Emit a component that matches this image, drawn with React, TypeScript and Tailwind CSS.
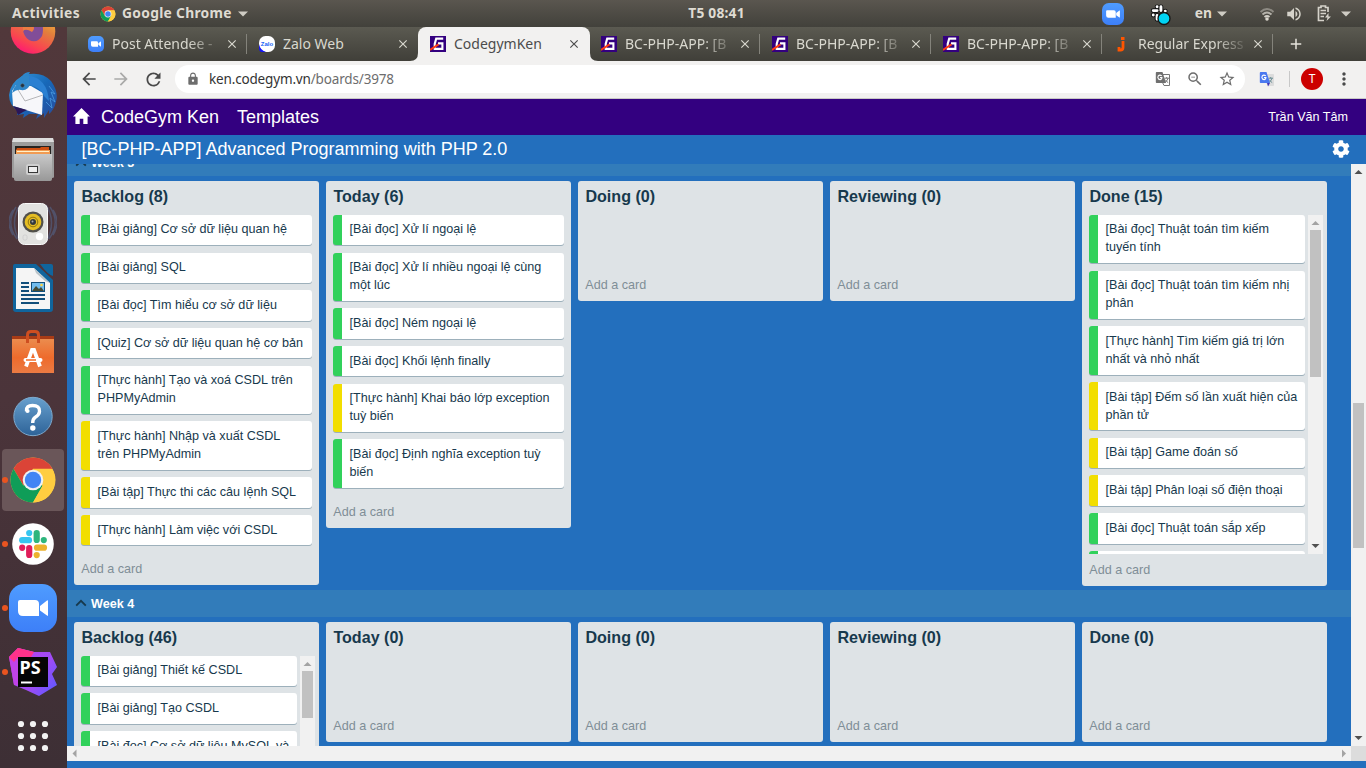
import React from "react";
import { MdArrowBack, MdArrowForward, MdClose, MdLock, MdRefresh, MdStarBorder, MdAdd, MdMoreVert, MdZoomOut, MdVolumeUp } from "react-icons/md";
import { FaCog } from "react-icons/fa";

type CardData = { text: string[]; yellow?: boolean };

const g = (...text: string[]): CardData => ({ text });
const y = (...text: string[]): CardData => ({ text, yellow: true });

const week3Backlog = [
  g("[Bài giảng] Cơ sở dữ liệu quan hệ"),
  g("[Bài giảng] SQL"),
  g("[Bài đọc] Tìm hiểu cơ sở dữ liệu"),
  g("[Quiz] Cơ sở dữ liệu quan hệ cơ bản"),
  g("[Thực hành] Tạo và xoá CSDL trên", "PHPMyAdmin"),
  y("[Thực hành] Nhập và xuất CSDL", "trên PHPMyAdmin"),
  y("[Bài tập] Thực thi các câu lệnh SQL"),
  y("[Thực hành] Làm việc với CSDL"),
];
const week3Today = [
  g("[Bài đọc] Xử lí ngoại lệ"),
  g("[Bài đọc] Xử lí nhiều ngoại lệ cùng", "một lúc"),
  g("[Bài đọc] Ném ngoại lệ"),
  g("[Bài đọc] Khối lệnh finally"),
  y("[Thực hành] Khai báo lớp exception", "tuỳ biến"),
  g("[Bài đọc] Định nghĩa exception tuỳ", "biến"),
];
const week3Done = [
  g("[Bài đọc] Thuật toán tìm kiếm", "tuyến tính"),
  g("[Bài đọc] Thuật toán tìm kiếm nhị", "phân"),
  g("[Thực hành] Tìm kiếm giá trị lớn", "nhất và nhỏ nhất"),
  y("[Bài tập] Đếm số lần xuất hiện của", "phần tử"),
  y("[Bài tập] Game đoán số"),
  y("[Bài tập] Phân loại số điện thoại"),
  g("[Bài đọc] Thuật toán sắp xếp"),
  g(" "),
];
const week4Backlog = [
  g("[Bài giảng] Thiết kế CSDL"),
  g("[Bài giảng] Tạo CSDL"),
  g("[Bài đọc] Cơ sở dữ liệu MySQL và"),
];

function Arrow({ dir, dim }: { dir: "up" | "down" | "left" | "right"; dim?: boolean }) {
  const d = {
    up: "M3.5 10L7.5 6L11.5 10Z",
    down: "M3.5 5L7.5 9L11.5 5Z",
    left: "M9.5 3.5L5.5 7.5L9.5 11.5Z",
    right: "M6 3.5L10 7.5L6 11.5Z",
  }[dir];
  return (
    <svg width="15" height="15" className={dim ? "shrink-0 fill-[#a3a3a3]" : "shrink-0 fill-[#505050]"}>
      <path d={d} />
    </svg>
  );
}

function Card({ card }: { card: CardData }) {
  return (
    <div className={`mb-[7.25px] rounded-[3px] border-l-[9px] bg-white pt-[6.575px] pb-[5.925px] pl-[7.5px] shadow-[0_1px_0_#9db0bb] ${card.yellow ? "border-[#f2de00]" : "border-[#31d15b]"}`}>
      {card.text.map((t) => (
        <div key={t} className="h-[18px] whitespace-nowrap text-[12.6px] leading-[16px] text-[#17394d]">{t}</div>
      ))}
    </div>
  );
}

function Column({ title, cards = [], scroll }: { title: string; cards?: CardData[]; scroll?: "long" | "short" }) {
  return (
    <section className="w-[245px] shrink-0 rounded-[3px] bg-[#dee3e6]">
      <h3 className="h-[33.8px] pl-[7.4px] text-[16.1px] leading-[31px] font-bold text-[#17394d]">{title}</h3>
      {scroll ? (
        <div className="mr-[4px] ml-[7px] flex h-[338.8px] overflow-hidden">
          <div className="mr-[3px] grow">
            {cards.map((c) => <Card key={c.text[0]} card={c} />)}
          </div>
          <div className="flex w-[15px] flex-col items-center bg-[#f1f1f1]">
            <Arrow dir="up" dim />
            <div className={scroll === "long" ? "h-[147px] w-[11px] bg-[#c1c1c1]" : "h-[47px] w-[11px] bg-[#c1c1c1]"} />
            <div className="grow" />
            <Arrow dir="down" />
          </div>
        </div>
      ) : (
        <div className="mx-[7px] min-h-[53.6px]">
          {cards.map((c) => <Card key={c.text[0]} card={c} />)}
        </div>
      )}
      <div className="h-[32.4px] pt-[7.74px] pl-[7.3px] text-[12.6px] leading-[18px] text-[#7f8e97]">Add a card</div>
    </section>
  );
}

function WeekBand({ label }: { label: string }) {
  return (
    <div className="flex h-[27px] shrink-0 items-center bg-[#327cba] pl-[8px]">
      <svg width="12" height="8" className="fill-none stroke-[#17394d] stroke-[1.9]"><path d="M1.2 6.6L6 1.9L10.8 6.6" /></svg>
      <span className="pt-px pl-[4px] text-[12.6px] leading-[18px] font-bold text-white">{label}</span>
    </div>
  );
}

function CodegymIcon() {
  return (
    <svg width="16" height="16" className="shrink-0">
      <rect width="16" height="16" fill="#33007f" />
      <path d="M13.200 2.600H6.200L4.700 8V12.900H12.400V7.400H8" fill="none" stroke="#fff" strokeWidth="2.100" />
      <path d="M0 14L8.500 8.400" stroke="#ff3c14" strokeWidth="2" />
    </svg>
  );
}

function TranslateIcon({ blue }: { blue?: boolean }) {
  return (
    <svg width="16" height="16" viewBox="0 0 16 16" className="shrink-0">
      <path d="M6 3.500H14.500V14.500H9L7.500 11.500" fill={blue ? "#dcdcdc" : "#fff"} stroke={blue ? "#dcdcdc" : "#777"} />
      <path d="M9.500 7.200H14M11.700 6V7.200M13 7.200Q12.500 10 9.800 11.500M10.500 8.800Q11.500 10.800 13.200 11.600" fill="none" stroke={blue ? "#6d8f96" : "#777"} strokeWidth="1" />
      <path d="M1.500 1H7.500L11 12H1.500Q.8 12 .8 11V2Q.8 1 1.500 1Z" fill={blue ? "#4a78ef" : "#6f6f6f"} />
      {blue && <path d="M8 12H11L9 15.500Z" fill="#4035b8" />}
      <path d="M6.800 4.900Q4.800 3.300 3.300 4.900Q2.300 6.500 3.500 8Q5.200 9.300 6.600 7.900L6.900 6.600H5" fill="none" stroke="#fff" strokeWidth="1.100" />
    </svg>
  );
}

function Camera({ size }: { size: number }) {
  return (
    <svg width={size} height={size} viewBox="0 0 48 48" className="shrink-0">
      <defs><linearGradient id="cam" x2="0" y2="1"><stop stopColor="#4f9cff" /><stop offset="1" stopColor="#3d7ff8" /></linearGradient></defs>
      <rect width="48" height="48" rx="15" fill="url(#cam)" />
      <path d="M9 18Q9 16 11 16H26Q30 16 30 20V32H14Q9 32 9 27ZM31 22L38 16.5Q39 16 39 17V31Q39 32.500 38 31.500L31 26.500Z" fill="#fff" />
    </svg>
  );
}

function ChromeLogo({ size }: { size: number }) {
  return (
    <svg width={size} height={size} viewBox="0 0 48 48" className="shrink-0">
      <circle cx="24" cy="24" r="22.500" fill="#ffcd40" />
      <path d="M4.500 12.800A22.500 22.500 0 0 1 43.500 12.800H24L14.300 29.600Z" fill="#db4437" />
      <path d="M4.500 12.800A22.500 22.500 0 0 0 24 46.500L33.700 29.600L24 24L14.300 29.600Z" fill="#0f9d58" />
      <path d="M43.500 13.500H24V24L33.700 29.600L24 46.500A22.500 22.500 0 0 0 43.500 13.500Z" fill="#ffcd40" />
      <circle cx="24" cy="24" r="10.300" fill="#f1f1f1" />
      <circle cx="24" cy="24" r="8.200" fill="#4285f4" />
    </svg>
  );
}

function Firefox() {
  return (
    <svg width="48" height="48" viewBox="0 0 48 48">
      <defs><linearGradient id="ff" x1="0.3" y1="1" x2="0.8" y2="0"><stop stopColor="#ff1676" /><stop offset=".25" stopColor="#f9474f" /><stop offset=".6" stopColor="#e2803c" /><stop offset="1" stopColor="#ffc53b" /></linearGradient></defs>
      <circle cx="24" cy="23.500" r="22.300" fill="url(#ff)" />
      <path d="M14 20Q14 28 20 32Q28 36 33 28Q35 22 33 15H14Z" fill="#814d98" />
      <path d="M7 15L14 17L14 23Q17 20 23 24Q27 21 23 15Z" fill="#ec7d42" />
    </svg>
  );
}

function Thunderbird() {
  return (
    <svg width="48" height="48" viewBox="0 0 48 48">
      <defs><linearGradient id="tb" x2="1" y2="1"><stop stopColor="#3a9bd9" /><stop offset=".5" stopColor="#1768b8" /><stop offset="1" stopColor="#2a4a9a" /></linearGradient></defs>
      <path d="M13 4Q16 0 21 0L20 2Q34 0 42 9Q50 20 47 30Q45 38 40 42L40 38L35 46L35 41L27 47L29 42L20 42L14 46L15 42L8 43L9 39Q0 33 0 23Q1 11 13 4Z" fill="url(#tb)" />
      <path d="M3 19L7 13L22 14L34 21L33 43L4 34Z" fill="#f7f7fa" />
      <path d="M8 16L16 29L34 23" fill="none" stroke="#b5b5b8" />
      <path d="M4 34L18 38L14 40L9 43Q8 38 4 34Z" fill="#2b1658" />
      <path d="M13 4Q9 7 8 12Q4 16 3 21Q8 17 12 18Q19 19 21 12L20 3Z" fill="#2f86c8" />
      <path d="M20 4Q38 6 40 29L35 24Q32 16 21 13Z" fill="#2b80d2" />
      <path d="M40 14L46 22L42 20L46 30L41 26L43 36L37 30" fill="none" stroke="#4a9be0" strokeWidth=".8" />
      <circle cx="13.500" cy="13.500" r="1.700" fill="#1c3148" stroke="#65563a" strokeWidth=".5" />
    </svg>
  );
}

function Files() {
  return (
    <svg width="48" height="48" viewBox="0 0 48 48">
      <defs><linearGradient id="fi" x2="0" y2="1"><stop stopColor="#c9c9c9" /><stop offset="1" stopColor="#989898" /></linearGradient></defs>
      <path d="M4 2H44L45 7V41Q45 42 43 42H5Q3 42 3 41V7Z" fill="#9c9c9c" />
      <path d="M4 2H44L45 6H3Z" fill="#ddd" />
      <rect x="6" y="10" width="36" height="9" fill="#252321" />
      <path d="M8 12H31L32 11H40V19H7V14Z" fill="#ce4f12" />
      <path d="M7 14H41V18H7Z" fill="#f19b52" /><path d="M8 15.500H40" stroke="#fff0c8" />
      <path d="M5 18H43V43Q43 45 41 45H7Q5 45 5 43Z" fill="url(#fi)" />
      <rect x="17" y="28" width="14" height="11" rx="2.500" fill="#cfcfcf" />
      <rect x="19.500" y="30.500" width="9" height="6" fill="#eee" stroke="#383838" />
    </svg>
  );
}

function Rhythmbox() {
  return (
    <svg width="48" height="48" viewBox="0 0 48 48">
      <g fill="none" stroke="#536b97" strokeWidth="1.500" opacity=".5">
        <path d="M7 7Q-4 23 8 39M4 10Q-4 22 4 35M11 5Q0 22 11 42M41 7Q52 23 40 39M44 10Q52 22 44 35M37 5Q48 22 37 42" />
      </g>
      <rect x="9.500" y="3.500" width="29" height="41" rx="6" fill="#e2e2e0" stroke="#fafafa" />
      <circle cx="24" cy="22" r="10.500" fill="#51504b" />
      <circle cx="24" cy="22" r="8.300" fill="#e5bd22" />
      <circle cx="24" cy="22" r="4.800" fill="none" stroke="#907510" />
      <circle cx="24" cy="22" r="3" fill="#343a3e" /><circle cx="23.500" cy="21.500" r="1" fill="#aaa" />
      <circle cx="30.500" cy="36.500" r="3.700" fill="#fff" />
      <rect x="14" y="35" width="4" height="5" rx="1.500" fill="none" stroke="#d0d0d0" />
    </svg>
  );
}

function Writer() {
  return (
    <svg width="48" height="48" viewBox="0 0 48 48">
      <path d="M6 0H27L44 16V45Q44 48 41 48H7Q4 48 4 45V2Q4 0 6 0ZM31 0H42Q44 0 44 2V12Q39 11 31 0Z" fill="#10659d" />
      <path d="M7 4H25L41 19V45H7Z" fill="#f5f5f5" />
      <path d="M25 4L41 19L36 17L27 9Z" fill="#b9c4ca" />
      <path d="M12 19H20M12 23H20M12 27H20M12 31H36M12 35H36M12 39H30" stroke="#124f7b" strokeWidth="2" />
      <rect x="22.500" y="18.500" width="13" height="9" fill="#72bdee" stroke="#124f7b" />
      <path d="M23 27L27 22L30 25L32 23L35 27Z" fill="#454b35" /><circle cx="32.500" cy="21" r="1.300" fill="#ffd43d" />
    </svg>
  );
}

function Software() {
  return (
    <svg width="48" height="48" viewBox="0 0 48 48">
      <defs><linearGradient id="so" x2="0" y2="1"><stop stopColor="#eb8c4e" /><stop offset=".55" stopColor="#ee6b2c" /><stop offset="1" stopColor="#eb7b43" /></linearGradient></defs>
      <path d="M3 8H45V12H3Z" fill="#a83b16" />
      <path d="M3 11H45V45H3Z" fill="url(#so)" />
      <path d="M18.500 15V7Q18.500 3.500 22 3.500H26Q29.500 3.500 29.500 7V15" fill="none" stroke="#ce4e20" strokeWidth="3" />
      <path d="M17 38.500L23 21.800H25L31 38.500" fill="none" stroke="#fff" strokeWidth="3.800" />
      <path d="M16.500 32H31.500" stroke="#fff" strokeWidth="4" strokeLinecap="round" />
      <path d="M17 32H27" stroke="#f06b27" strokeWidth="1.500" />
    </svg>
  );
}

function Help() {
  return (
    <svg width="48" height="48" viewBox="0 0 48 48">
      <defs><linearGradient id="he" x2="0" y2="1"><stop stopColor="#67a0ce" /><stop offset="1" stopColor="#2e6398" /></linearGradient></defs>
      <circle cx="24" cy="24.500" r="19.200" fill="url(#he)" stroke="#7da9cd" />
      <path d="M17.500 19Q17 13.500 23.500 13.500Q31 13.500 30.500 19.500Q30.300 23 26 25.500Q23.700 27 23.700 31" fill="none" stroke="#fff" strokeWidth="3.400" />
      <circle cx="18.500" cy="19" r="2.100" fill="#fff" /><circle cx="23.800" cy="36" r="2.700" fill="#fff" />
    </svg>
  );
}

function Slack() {
  return (
    <svg width="48" height="48">
      <circle cx="24" cy="24" r="20.800" fill="#fff" />
      <g strokeWidth="6.200" strokeLinecap="round">
        <path d="M13.200 20.200H20" stroke="#36c5f0" /><path d="M27.700 13.200V20" stroke="#2eb67d" />
        <path d="M28 27.700H35" stroke="#ecb22e" /><path d="M20.200 28V35" stroke="#e01e5a" />
        <path d="M20.200 13V13.100" stroke="#36c5f0" /><path d="M34.800 20V20.100" stroke="#2eb67d" />
        <path d="M27.700 35V35.100" stroke="#ecb22e" /><path d="M13.200 27.700V27.800" stroke="#e01e5a" />
      </g>
    </svg>
  );
}

function PhpStorm() {
  return (
    <div className="relative h-12 w-12">
      <svg width="48" height="48" viewBox="0 0 48 48">
        <defs><linearGradient id="ps" x2="1" y2=".7"><stop stopColor="#ff318c" /><stop offset=".3" stopColor="#b345f1" /><stop offset=".7" stopColor="#9d4bf5" /><stop offset="1" stopColor="#6b57ff" /></linearGradient></defs>
        <path d="M0 9L9 0L25 4L41 4L48 19L43 26L48 37L30 48L17 42L5 37Z" fill="url(#ps)" />
        <path d="M0 9L9 0L25 4L23 9H9V37H5Z" fill="#c043e8" />
        <path d="M0 9L9 0L25 4L22 9H9L5 14Z" fill="#ff328a" />
        <rect x="9" y="9" width="30" height="30" fill="#050505" />
        <path d="M12 34.500H23" stroke="#fff" strokeWidth="2" />
      </svg>
      <span className="absolute top-[11px] left-[10.500px] font-['Noto_Sans',sans-serif] text-[18px] leading-[17px] font-bold text-white">PS</span>
    </div>
  );
}

function AppsGrid() {
  return (
    <svg width="48" height="48" fill="#f3f3f3">
      {[12, 24, 36].map((cy) => [12, 24, 36].map((cx) => <circle key={`${cx}-${cy}`} cx={cx} cy={cy} r="3.100" />))}
    </svg>
  );
}

function Launcher() {
  const items = [
    { icon: <Firefox /> }, { icon: <Thunderbird /> }, { icon: <Files /> }, { icon: <Rhythmbox /> },
    { icon: <Writer /> }, { icon: <Software /> }, { icon: <Help /> },
    { icon: <ChromeLogo size={48} />, running: true, active: true },
    { icon: <Slack />, running: true }, { icon: <Camera size={48} />, running: true },
    { icon: <PhpStorm />, running: true }, { icon: <AppsGrid /> },
  ];
  return (
    <aside className="w-[67px] shrink-0 overflow-hidden bg-linear-to-b from-[#51383b] via-[#4b343a] to-[#3d2f35]">
      <div className="-mt-[27px]">
        {items.map((it, i) => (
          <div key={i} className="flex h-[64px] items-center pl-[2px]">
            <div className={`flex h-[62px] w-[62px] items-center rounded-[4px] ${it.active ? "bg-[#6a5659]" : ""}`}>
              <div className={`h-[6px] w-[6px] rounded-full ${it.running ? "bg-[#e95420]" : ""}`} />
              <div className="ml-px">{it.icon}</div>
            </div>
          </div>
        ))}
      </div>
    </aside>
  );
}

function Tab({ icon, title, active, divider, fade }: { icon: React.ReactNode; title: string; active?: boolean; divider?: boolean; fade?: boolean }) {
  return (
    <div className={`relative flex h-[34px] shrink-0 items-center pl-[12px] ${active ? "-mr-px w-[172px] rounded-t-[8px] bg-[#f2f1f0] text-[#4c4c4c]" : "w-[171px] text-[#d9d8cf]"}`}>
      {icon}
      <span className={`ml-[8px] w-[106px] overflow-hidden text-[14px] leading-[20px] whitespace-nowrap ${fade ? "[mask-image:linear-gradient(to_right,black_76px,transparent_112px)]" : ""}`}>{title}</span>
      <MdClose size={14} className="ml-[7px] shrink-0" />
      {divider && <i className="absolute top-[7px] right-0 h-[20px] w-px bg-[#84837b]" />}
      {active && (
        <>
          <svg width="8" height="8" className="absolute bottom-0 -left-[8px]"><path d="M8 0V8H0Q8 8 8 0" fill="#f2f1f0" /></svg>
          <svg width="8" height="8" className="absolute -right-[8px] bottom-0"><path d="M0 0V8H8Q0 8 0 0" fill="#f2f1f0" /></svg>
        </>
      )}
    </div>
  );
}

function Caret() {
  return <svg width="10" height="6" className="shrink-0 fill-[#cfccc4]"><path d="M0 .5H10L5 5.500Z" /></svg>;
}

function TopBar() {
  return (
    <header className="grid h-[27px] shrink-0 grid-cols-[686px_61px_1fr] items-center bg-linear-to-b from-[#5a564f] to-[#42413b] font-['Noto_Sans',sans-serif] text-[13.8px] font-bold text-[#dfdbd2]">
      <div className="flex items-center pl-[12px] whitespace-nowrap">
        <span className="w-[88px] tracking-[0.4px]">Activities</span>
        <ChromeLogo size={16} />
        <span className="w-[122px] pl-[6px] tracking-[0.3px]">Google Chrome</span>
        <Caret />
      </div>
      <div className="text-center whitespace-nowrap tracking-[0.2px]">T5 08:41</div>
      <div className="flex items-center justify-end pr-[15px]">
        <Camera size={22} />
        <svg width="24" height="24" viewBox="0 0 24 24" className="ml-[24px]">
          <g transform="translate(-.5 -.5) scale(.48)" strokeLinecap="round" fill="none">
            <path d="M12 19H20M28 11V19M29 28H37M20 29V37M20 11V11.100M37 20V20.100M12 28V28.100" stroke="#151515" strokeWidth="10" />
            <path d="M12 19H20M28 11V19M29 28H37M20 29V37M20 11V11.100M37 20V20.100M12 28V28.100" stroke="#fff" strokeWidth="6" />
          </g>
          <circle cx="16" cy="16.500" r="6" fill="#00d4f5" stroke="#151515" strokeWidth="1.300" />
        </svg>
        <span className="mr-[5px] ml-[23px]">en</span>
        <Caret />
        <svg width="16" height="16" viewBox="0 0 16 16" className="ml-[32px] fill-none stroke-[1.900]">
          <path d="M1.500 6Q8 0 14.500 6" stroke="#8d8a83" /><path d="M3.500 8.500Q8 4.500 12.500 8.500" stroke="#b5b2aa" /><path d="M5.500 11Q8 9 10.500 11" stroke="#d2cfc7" />
          <circle cx="8" cy="13" r=".8" stroke="#dfdbd2" />
        </svg>
        <MdVolumeUp size={18} className="ml-[10px] text-[#d5d2ca]" />
        <svg width="15" height="17" viewBox="0 0 15 17" className="ml-[14px] fill-none stroke-[#d5d2ca] stroke-[1.700]">
          <path d="M7 15.500H1.500V2.500H4V1H8.500V2.500H11V7M3.500 5.500H9M3.500 8.500H9M3.500 11.500H7" />
          <path d="M11.500 8L8 12.500H10.500L9.500 16L14 11.500H11.500Z" className="fill-[#d5d2ca] stroke-none" />
        </svg>
        <span className="ml-[9px]"><Caret /></span>
      </div>
    </header>
  );
}

function Browser() {
  const zalo = (
    <svg width="16" height="16" className="shrink-0">
      <rect width="16" height="16" rx="6.500" fill="#fff" /><path d="M0 8Q1 14 7 16H3Q0 16 0 12Z" fill="#1515f5" />
      <text x="1.800" y="9.800" fontSize="6" fontWeight="700" fontFamily="Liberation Sans, sans-serif" fill="#1763f5">Zalo</text>
    </svg>
  );
  const jay = <svg width="16" height="16" className="shrink-0"><path d="M9 5V11.500Q9 14 6.500 14H5V11M7 2.500H10.500" stroke="#ff5500" strokeWidth="2.800" fill="none" /></svg>;
  return (
    <div className="shrink-0 font-['Noto_Sans',sans-serif]">
      <div className="flex h-[34px] items-center bg-linear-to-b from-[#5b5a51] to-[#403f39] pl-[9px]">
        <Tab icon={<Camera size={16} />} title="Post Attendee -" divider fade />
        <Tab icon={zalo} title="Zalo Web" />
        <Tab icon={<CodegymIcon />} title="CodegymKen" active />
        <Tab icon={<CodegymIcon />} title="BC-PHP-APP: [B" divider fade />
        <Tab icon={<CodegymIcon />} title="BC-PHP-APP: [B" divider fade />
        <Tab icon={<CodegymIcon />} title="BC-PHP-APP: [B" divider fade />
        <Tab icon={jay} title="Regular Express" divider fade />
        <MdAdd size={18} className="ml-[14px] text-[#e6e4dc]" />
      </div>
      <div className="flex h-[38px] items-center border-b border-[#c9c8c6] bg-[#f2f1f0] pb-px text-[#4a4a4a]">
        <MdArrowBack size={20} className="ml-[12px]" />
        <MdArrowForward size={20} className="ml-[12px] text-[#a9a9a8]" />
        <MdRefresh size={21} className="ml-[12px]" />
        <div className="ml-[11px] flex h-[28px] w-[1070px] items-center rounded-full bg-white pl-[11px] text-[#6d6d6d]">
          <MdLock size={14} />
          <span className="ml-[9px] grow text-[13.500px] leading-[20px] tracking-[-0.16px]"><span className="text-[#333]">ken.codegym.vn</span>/boards/3978</span>
          <span className="mr-[15px]"><TranslateIcon /></span>
          <MdZoomOut size={18} className="mr-[14px]" />
          <MdStarBorder size={18} className="mr-[9px]" />
        </div>
        <span className="ml-[14px]"><TranslateIcon blue /></span>
        <i className="ml-[14px] h-[16px] w-px bg-[#c8c8c8]" />
        <div className="ml-[11px] flex h-[22px] w-[22px] items-center justify-center rounded-full bg-[#cc0000] text-[12px] text-white">T</div>
        <MdMoreVert size={20} className="ml-[11px]" />
      </div>
    </div>
  );
}

function Week({ label, children }: { label: string; children: React.ReactNode }) {
  return (
    <>
      <WeekBand label={label} />
      <div className="flex shrink-0 items-start gap-[7px] pt-[5px] pb-[3.95px] pl-[7px]">{children}</div>
    </>
  );
}

export default function App() {
  return (
    <div className="flex h-[768px] w-[1366px] flex-col overflow-hidden font-['Liberation_Sans',sans-serif]">
      <TopBar />
      <div className="flex min-h-0 grow">
        <Launcher />
        <main className="flex min-w-0 grow flex-col bg-[#236fbd]">
          <Browser />
          <nav className="flex h-[36px] shrink-0 items-center bg-[#330080] pr-[18px] pl-[6px] text-[18px] text-white">
            <svg width="17" height="16" viewBox="0 0 17 16" className="mb-[2px] fill-white"><path d="M8.500 0L17 8.500H14.600V16H10.300V10.800H6.700V16H2.400V8.500H0Z" /></svg>
            <span className="ml-[11px]">CodeGym Ken</span>
            <span className="ml-[18px] grow">Templates</span>
            <span className="text-[12.6px]">Trần Văn Tâm</span>
          </nav>
          <div className="flex h-[29px] shrink-0 items-center justify-between pr-[16px] pl-[14.5px] text-[18px] text-white">
            <h1>[BC-PHP-APP] Advanced Programming with PHP 2.0</h1>
            <FaCog size={18} className="mb-px" />
          </div>
          <div className="flex h-[582px] shrink-0">
            <div className="flex grow flex-col overflow-hidden">
              <div className="-mt-[15px] flex flex-col">
                <Week label="Week 3">
                  <Column title="Backlog (8)" cards={week3Backlog} />
                  <Column title="Today (6)" cards={week3Today} />
                  <Column title="Doing (0)" />
                  <Column title="Reviewing (0)" />
                  <Column title="Done (15)" cards={week3Done} scroll="long" />
                </Week>
                <Week label="Week 4">
                  <Column title="Backlog (46)" cards={week4Backlog} scroll="short" />
                  <Column title="Today (0)" />
                  <Column title="Doing (0)" />
                  <Column title="Reviewing (0)" />
                  <Column title="Done (0)" />
                </Week>
              </div>
            </div>
            <div className="flex w-[15px] shrink-0 flex-col items-center bg-[#f1f1f1]">
              <Arrow dir="up" />
              <div className="mt-[224px] h-[145px] w-[11px] bg-[#c1c1c1]" />
              <div className="grow" />
              <Arrow dir="down" />
            </div>
          </div>
          <div className="flex h-[15px] shrink-0 bg-[#f1f1f1]">
            <Arrow dir="left" dim />
            <div className="grow" />
            <Arrow dir="right" dim />
            <div className="w-[15px] bg-[#dcdcdc]" />
          </div>
        </main>
      </div>
    </div>
  );
}
